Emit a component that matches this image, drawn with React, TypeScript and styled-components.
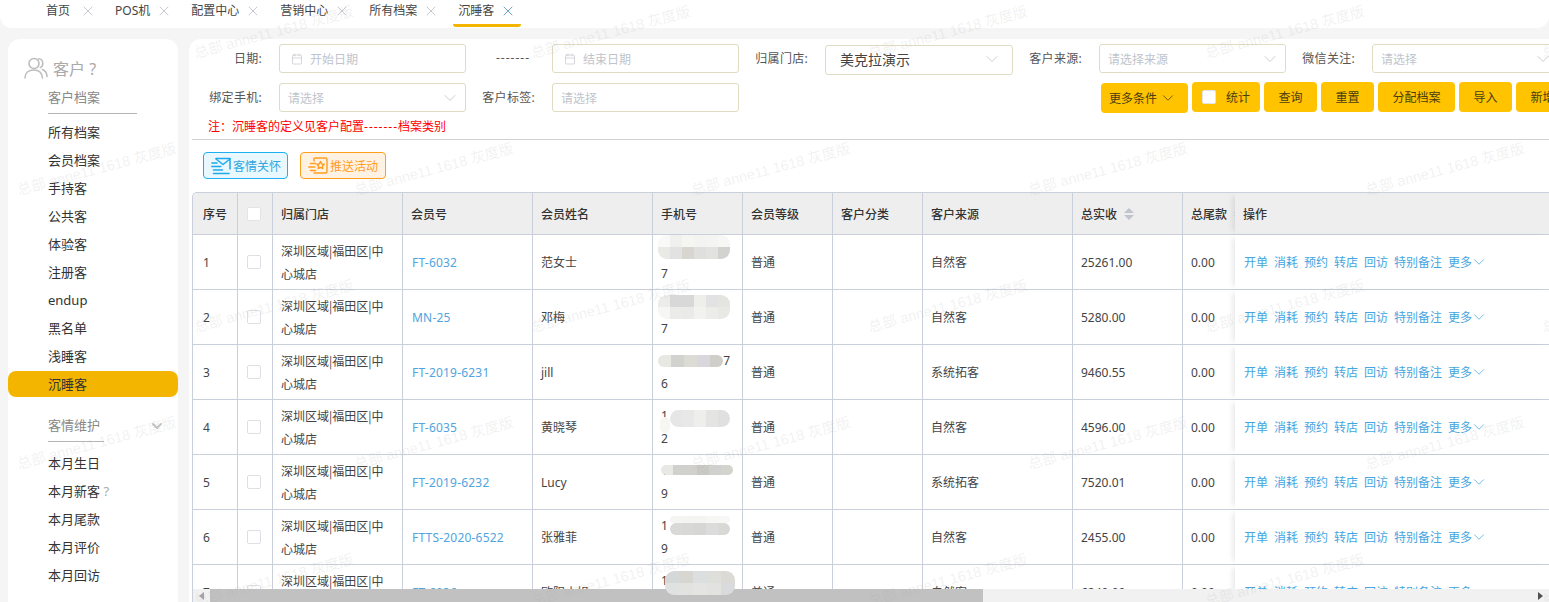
import React from "react";
import styled, { createGlobalStyle } from "styled-components";
import { Calendar, ChevronDown, X } from "lucide-react";

const GlobalStyle = createGlobalStyle`
  html, body { margin: 0; padding: 0; height: 100%; overflow: hidden; background: #f5f5f5; }
  body { font-family: "Noto Sans", "Noto Sans CJK SC", "Liberation Sans", sans-serif; font-size: 12px; color: #333; }
  * { box-sizing: border-box; }
`;

const Page = styled.div`
  position: relative;
  width: 100vw;
  height: 100vh;
  overflow: hidden;
  display: flex;
  flex-direction: column;
`;

const TabBar = styled.nav`
  flex: none;
  height: 28px;
  background: #fff;
  border-radius: 0 0 12px 12px;
  display: flex;
  gap: 9px;
  padding-left: 41px;
`;

const Tab = styled.div<{ $active?: boolean; $first?: boolean }>`
  height: 27px;
  padding: 0 5px 2px;
  display: flex;
  align-items: center;
  gap: ${(p) => (p.$first ? 10 : 6)}px;
  line-height: 22px;
  color: #444;
  border-bottom: 3px solid ${(p) => (p.$active ? "#f3b500" : "transparent")};
  border-radius: 0 0 3px 3px;
  svg { color: ${(p) => (p.$active ? "#4a8fb5" : "#b8bcc4")}; }
`;

const Body = styled.div`
  flex: 1;
  min-height: 0;
  display: flex;
  gap: 11px;
  padding: 11px 0 0 8px;
`;

const Sidebar = styled.aside`
  flex: none;
  width: 170px;
  background: #fff;
  border-radius: 12px 12px 0 0;
  padding-top: 18px;
`;

const SideTitle = styled.div`
  height: 22px;
  padding-left: 16px;
  display: flex;
  align-items: center;
  gap: 5px;
  font-size: 16px;
  color: #aaa;
`;

const SideHeadRow = styled.div<{ $top: number; $bottom: number }>`
  display: flex;
  align-items: center;
  padding-left: 40px;
  margin: ${(p) => p.$top}px 0 ${(p) => p.$bottom}px;
  svg { margin-left: 45px; color: #c4c4c4; margin-top: -2px; }
`;

const SideHead = styled.div<{ $w: number }>`
  width: ${(p) => p.$w}px;
  height: 31px;
  line-height: 29px;
  font-size: 13px;
  color: #888;
  border-bottom: 1px solid #b5b5b5;
`;

const SideList = styled.div`
  display: flex;
  flex-direction: column;
  gap: 2px;
`;

const SideItem = styled.div<{ $active?: boolean }>`
  height: 26px;
  line-height: 26px;
  padding-left: 40px;
  font-size: 13px;
  color: #333;
  border-radius: 8px;
  background: ${(p) => (p.$active ? "#f3b500" : "transparent")};
`;

const Hint = styled.span`
  color: #aaa;
`;

const Main = styled.main`
  flex: 1;
  min-width: 0;
  background: #fff;
  border-radius: 12px 0 0 0;
  padding-top: 5px;
  display: flex;
  flex-direction: column;
  overflow: hidden;
`;

const FormRow = styled.div<{ $bottom?: number }>`
  display: flex;
  align-items: flex-start;
  flex: none;
  margin-bottom: ${(p) => p.$bottom ?? 0}px;
`;

const Label = styled.label<{ $w: number }>`
  flex: none;
  width: ${(p) => p.$w}px;
  margin-right: 17px;
  text-align: right;
  line-height: 29px;
  letter-spacing: 0.3px;
  color: #555;
`;

const Dashes = styled.span`
  letter-spacing: 1px;
`;

const Separator = styled.span`
  flex: none;
  width: 86px;
  padding-left: 30px;
  line-height: 27px;
  color: #555;
`;

const Control = styled.div<{ $w?: number; $value?: boolean }>`
  flex: none;
  width: ${(p) => p.$w ?? 187}px;
  height: ${(p) => (p.$value ? 30 : 29)}px;
  margin-top: ${(p) => (p.$value ? 1 : 0)}px;
  padding: ${(p) => (p.$value ? "0 14px 2px" : "0 9px 0 8px")};
  border: 1px solid #e0dcc2;
  border-radius: 3px;
  display: flex;
  align-items: center;
  justify-content: space-between;
  color: ${(p) => (p.$value ? "#444" : "#c0c4cc")};
  font-size: ${(p) => (p.$value ? 14 : 12)}px;
  background: #fff;
  svg { flex: none; }
`;

const DateText = styled.span`
  display: flex;
  align-items: center;
  gap: 7px;
  padding-left: 3px;
  svg { color: #bfc3cb; }
`;

const ChevronSlot = styled.span`
  display: flex;
  margin-right: -4px;
  color: #bfc3cb;
`;

const ButtonGroup = styled.div`
  flex: none;
  display: flex;
  gap: 4px;
  margin-left: 362px;
  margin-top: -1px;
`;

const YellowButton = styled.div<{ $w: number; $low?: boolean }>`
  flex: none;
  width: ${(p) => p.$w}px;
  height: 30px;
  margin-top: ${(p) => (p.$low ? 1 : 0)}px;
  background: #ffc300;
  border-radius: 4px;
  color: #4a3d10;
  display: flex;
  align-items: center;
  justify-content: ${(p) => (p.$low ? "flex-start" : "center")};
  padding-left: ${(p) => (p.$low ? 8 : 0)}px;
  gap: 2px;
`;

const WhiteCheck = styled.span`
  width: 14px;
  height: 14px;
  margin-right: 8px;
  background: #fff;
  border: 1px solid #e4e4e4;
  border-radius: 2px;
`;

const Note = styled.div`
  flex: none;
  height: 18px;
  margin: 5px 0 3px;
  padding-left: 19px;
  line-height: 18px;
  color: #f00;
`;

const Divider = styled.div`
  flex: none;
  margin-left: 3px;
  border-top: 1px solid #d2d2d2;
`;

const ActionRow = styled.div`
  flex: none;
  display: flex;
  gap: 12px;
  padding-left: 14px;
  margin: 12px 0 13px;
`;

const ActionButton = styled.div<{ $tone: "blue" | "orange"; $w: number }>`
  width: ${(p) => p.$w}px;
  height: 27px;
  border-radius: 4px;
  display: flex;
  align-items: center;
  gap: 2px;
  padding-left: 7px;
  border: 1px solid ${(p) => (p.$tone === "blue" ? "#1bb0f0" : "#ff9f1a")};
  background: ${(p) => (p.$tone === "blue" ? "#e9f7ff" : "#fff2e3")};
  color: ${(p) => (p.$tone === "blue" ? "#2ea7e0" : "#ff9d1e")};
`;

const TableWrap = styled.div`
  position: relative;
  flex: 1;
  min-height: 0;
  margin-left: 3px;
  overflow: hidden;
  border-top: 1px solid #c9d0dc;
  border-left: 1px solid #c9d0dc;
  border-top-left-radius: 5px;
`;

const COLUMNS = "45px 35px 130px 130px 120px 90px 90px 90px 150px 110px 52px 1fr";

const HeadRow = styled.div`
  display: grid;
  grid-template-columns: ${COLUMNS};
  height: 42px;
  background: #eee;
  border-bottom: 1px solid #c9d0dc;
`;

const BodyRow = styled.div`
  display: grid;
  grid-template-columns: ${COLUMNS};
  height: 55px;
  border-bottom: 1px solid #c9d0dc;
`;

const HeadCell = styled.div<{ $pad?: number; $plain?: boolean }>`
  display: flex;
  align-items: center;
  gap: 7px;
  overflow: hidden;
  white-space: nowrap;
  padding-left: ${(p) => p.$pad ?? 8}px;
  border-right: ${(p) => (p.$plain ? "0" : "1px solid #c9d0dc")};
  font-weight: 500;
  color: #333;
`;

const Cell = styled.div<{ $pad?: number; $plain?: boolean }>`
  display: flex;
  align-items: center;
  overflow: hidden;
  padding-left: ${(p) => p.$pad ?? 8}px;
  padding-right: 12px;
  line-height: 23px;
  border-right: ${(p) => (p.$plain ? "0" : "1px solid #c9d0dc")};
  color: #444;
`;

const StoreCell = styled(Cell)`
  font-family: "Noto Sans CJK SC", "Noto Sans", sans-serif;
`;

const OpHead = styled(HeadCell)`
  position: relative;
  z-index: 1;
  background: #eee;
  box-shadow: -5px 0 6px -3px rgba(0, 0, 0, 0.1);
`;

const OpCell = styled(Cell)`
  position: relative;
  z-index: 1;
  gap: 6px;
  background: #fff;
  white-space: nowrap;
  box-shadow: -5px 0 6px -3px rgba(0, 0, 0, 0.1);
`;

const MemberLink = styled.span`
  color: #50a4e0;
  padding-left: 1px;
  letter-spacing: 0.2px;
  white-space: nowrap;
`;

const OpLink = styled.span`
  display: inline-flex;
  align-items: center;
  color: #45a5e0;
  svg { margin-left: -2px; }
`;

const Check = styled.span<{ $head?: boolean }>`
  flex: none;
  width: 14px;
  height: 14px;
  background: #fff;
  border: 1px solid ${(p) => (p.$head ? "#e4e4e4" : "#dcdfe6")};
  border-radius: 2px;
`;

const SortIcon = styled.span`
  display: flex;
  flex-direction: column;
  gap: 2px;
  &::before, &::after {
    content: "";
    width: 0;
    height: 0;
    border-left: 5px solid transparent;
    border-right: 5px solid transparent;
  }
  &::before { border-bottom: 5px solid #c0c4cc; }
  &::after { border-top: 5px solid #c0c4cc; }
`;

const PhoneCell = styled.div`
  position: relative;
  padding-left: 8px;
  border-right: 1px solid #c9d0dc;
  line-height: 23px;
  color: #444;
  display: flex;
  flex-direction: column;
  justify-content: center;
`;

const PhoneLine = styled.div<{ $end?: boolean }>`
  height: 23px;
  text-align: ${(p) => (p.$end ? "right" : "left")};
  padding-right: 12px;
`;

const Mosaic = styled.div<{ $left: number; $top: number; $cols: number; $w: number; $h: number }>`
  position: absolute;
  z-index: 3;
  left: ${(p) => p.$left}px;
  top: ${(p) => p.$top}px;
  display: grid;
  grid-template-columns: repeat(${(p) => p.$cols}, ${(p) => p.$w}px);
  grid-auto-rows: ${(p) => p.$h}px;
  border-radius: 9px;
  overflow: hidden;
  filter: blur(0.7px);
`;

const MosaicBlock = styled.span<{ $c: string }>`
  background: ${(p) => p.$c};
`;

const ScrollBar = styled.div`
  position: absolute;
  z-index: 2;
  left: 0;
  right: 0;
  bottom: 0;
  height: 13px;
  background: #f1f1f1;
  display: flex;
  align-items: center;
`;

const ScrollArrow = styled.span<{ $dir: "left" | "right" }>`
  flex: none;
  width: 17px;
  display: flex;
  justify-content: center;
  &::before {
    content: "";
    width: 0;
    height: 0;
    border-top: 4px solid transparent;
    border-bottom: 4px solid transparent;
    ${(p) => (p.$dir === "left" ? "border-right: 5px solid #a3a3a3;" : "border-left: 5px solid #505050;")}
  }
`;

const ScrollThumb = styled.span`
  flex: none;
  width: 773px;
  height: 13px;
  background: #c1c1c1;
`;

const ScrollSpace = styled.span`
  flex: 1;
`;

const WatermarkLayer = styled.div`
  position: absolute;
  inset: 0;
  z-index: 10;
  overflow: hidden;
  pointer-events: none;
`;

const Watermark = styled.span<{ $x: number; $y: number }>`
  position: absolute;
  left: ${(p) => p.$x}px;
  top: ${(p) => p.$y - 20}px;
  line-height: 20px;
  white-space: nowrap;
  font-family: "Liberation Sans", "Noto Sans CJK SC", sans-serif;
  font-size: 14.5px;
  color: rgba(170, 170, 170, 0.17);
  transform-origin: left bottom;
  transform: rotate(-15deg);
`;

const PeopleIcon = () => (
  <svg width="24" height="22" viewBox="0 0 24 22" fill="none" stroke="#bdbdbd" strokeWidth="1.6" strokeLinecap="round">
    <circle cx="10" cy="6.5" r="5" />
    <path d="M1 21c0-5 3.5-8 9-8s8 3 8.5 8" />
    <path d="M14.5 1.8c2.5 0 4.3 2 4.3 4.6 0 2-1 3.4-2.6 4.2" />
    <path d="M18.5 12.5c2.6 1 4.3 3.5 4.5 7" />
  </svg>
);

const MailIcon = () => (
  <svg width="20" height="18" viewBox="0 0 20 18" fill="none" stroke="#1ea9ea" strokeWidth="1.5" strokeLinejoin="round" strokeLinecap="round">
    <path d="M5 1.5h14v10.5" />
    <path d="M5 2l7 5.5L19 2" />
    <path d="M1 6h5M0.8 9.5h9M2.5 13h9" strokeWidth="1.6" />
    <path d="M2.5 16.5h15.5" strokeWidth="1.6" />
  </svg>
);

const StarBoxIcon = () => (
  <svg width="20" height="18" viewBox="0 0 20 18" fill="none" stroke="#ff9d1e" strokeWidth="1.4" strokeLinejoin="round" strokeLinecap="round">
    <path d="M6 4V2.2C6 1.5 6.5 1 7.2 1h10.3c.8 0 1.5.7 1.5 1.5v12c0 .8-.7 1.5-1.5 1.5H6" />
    <path d="M12.5 4.5l1.2 2.4 2.5.4-1.8 1.8.4 2.5-2.3-1.2-2.3 1.2.4-2.5-1.8-1.8 2.5-.4z" />
    <path d="M2.5 6.5h5M0.8 10h6M2.5 13.5h5" strokeWidth="1.6" />
  </svg>
);

const TABS = ["首页", "POS机", "配置中心", "营销中心", "所有档案", "沉睡客"];
const ARCHIVE = ["所有档案", "会员档案", "手持客", "公共客", "体验客", "注册客", "endup", "黑名单", "浅睡客", "沉睡客"];
const CARE = ["本月生日", "本月新客", "本月尾款", "本月评价", "本月回访"];
const OPS = ["开单", "消耗", "预约", "转店", "回访", "特别备注"];

type Patch = { left: number; top: number; cols: number; w: number; h: number; colors: string[] };
type Row = {
  no: number;
  member: string;
  name: string;
  top?: string;
  topEnd?: boolean;
  bottom: string;
  source: string;
  total: string;
  patches: Patch[];
};

const ROWS: Row[] = [
  {
    no: 1, member: "FT-6032", name: "范女士", bottom: "7", source: "自然客", total: "25261.00",
    patches: [{ left: 5, top: 0, cols: 6, w: 12, h: 12, colors: ["#f9f9f7", "#f0f0ee", "#f5f5f2", "#f3f3f1", "#f4f4f2", "#f7f7f5", "#e9e9e5", "#e2e2e2", "#d8d6d0", "#dfdfdd", "#e2e2de", "#d2d2d0"] }],
  },
  {
    no: 2, member: "MN-25", name: "邓梅", bottom: "7", source: "自然客", total: "5280.00",
    patches: [{ left: 5, top: 5, cols: 6, w: 12, h: 12, colors: ["#ececea", "#d8d8d8", "#d8d8d8", "#eeeeea", "#e2e2e4", "#e4e4e0", "#f6f6f4", "#ebebe9", "#eaeae8", "#f2f2ee", "#ecece9", "#e8e8e4"] }],
  },
  {
    no: 3, member: "FT-2019-6231", name: "jill", top: "7", topEnd: true, bottom: "6", source: "系统拓客", total: "9460.55",
    patches: [{ left: 5, top: 10, cols: 5, w: 13, h: 12, colors: ["#e8e8e2", "#d2d2ce", "#dcdcd4", "#d8d8dc", "#d0cec8"] }],
  },
  {
    no: 4, member: "FT-6035", name: "黄晓琴", top: "1", bottom: "2", source: "自然客", total: "4596.00",
    patches: [
      { left: 17, top: 10, cols: 5, w: 12, h: 17, colors: ["#e6e6e6", "#e8e8e8", "#eeeeec", "#e4e4e2", "#e0e0e0"] },
      { left: 7, top: 17, cols: 1, w: 10, h: 16, colors: ["#f6f6f3"] },
    ],
  },
  {
    no: 5, member: "FT-2019-6232", name: "Lucy", top: "1", bottom: "9", source: "系统拓客", total: "7520.01",
    patches: [{ left: 8, top: 10, cols: 6, w: 12, h: 10, colors: ["#e8e8e4", "#d0d0cc", "#d2d0ca", "#c8c8c4", "#d0d0ce", "#d4d4ce"] }],
  },
  {
    no: 6, member: "FTTS-2020-6522", name: "张雅菲", top: "1", bottom: "9", source: "自然客", total: "2455.00",
    patches: [
      { left: 17, top: 6, cols: 5, w: 12, h: 7, colors: ["#f5f5f3", "#f4f4f2", "#f4f4f2", "#f6f6f4", "#f7f7f5"] },
      { left: 17, top: 13, cols: 5, w: 12, h: 12, colors: ["#d9d9d7", "#d8d8d6", "#d6d6d4", "#dcdcdc", "#d8d8d4"] },
    ],
  },
  {
    no: 7, member: "FT-6036", name: "欧阳小姐", top: "1", bottom: "", source: "自然客", total: "6240.00",
    patches: [{ left: 12, top: 6, cols: 5, w: 14, h: 12, colors: ["#d4d8d8", "#d8d6d0", "#dcdfe0", "#dedfda", "#dcdad4", "#e0e2e2", "#e2e2e0", "#e4e4e2", "#e2e2de", "#d8dadc"] }],
  },
];

const HEADERS = ["归属门店", "会员号", "会员姓名", "手机号", "会员等级", "客户分类", "客户来源"];

const MARK_TEXT = "总部 anne11 1618 灰度版";
const MARKS = [63, 200, 337, 474, 611].flatMap((y, row) =>
  [0, 1, 2, 3, 4].map((i) => ({ y, x: (row % 2 === 0 ? 197 : 20) + i * 337 }))
);

export default function App() {
  return (
    <Page>
      <GlobalStyle />
      <TabBar>
        {TABS.map((t, i) => (
          <Tab key={t} $active={i === TABS.length - 1} $first={i === 0}>
            {t}
            <X size={16} strokeWidth={1.2} />
          </Tab>
        ))}
      </TabBar>
      <Body>
        <Sidebar>
          <SideTitle>
            <PeopleIcon />
            客户 ?
          </SideTitle>
          <SideHeadRow $top={4} $bottom={5}>
            <SideHead $w={89}>客户档案</SideHead>
          </SideHeadRow>
          <SideList>
            {ARCHIVE.map((t, i) => (
              <SideItem key={t} $active={i === ARCHIVE.length - 1}>{t}</SideItem>
            ))}
          </SideList>
          <SideHeadRow $top={14} $bottom={8}>
            <SideHead $w={56}>客情维护</SideHead>
            <ChevronDown size={16} strokeWidth={3} />
          </SideHeadRow>
          <SideList>
            {CARE.map((t, i) => (
              <SideItem key={t}>
                {t}
                {i === 1 && <Hint> ?</Hint>}
              </SideItem>
            ))}
          </SideList>
        </Sidebar>
        <Main>
          <FormRow $bottom={8}>
            <Label $w={73}>日期:</Label>
            <Control>
              <DateText><Calendar size={12} strokeWidth={1.3} />开始日期</DateText>
            </Control>
            <Separator><Dashes>-------</Dashes></Separator>
            <Control>
              <DateText><Calendar size={12} strokeWidth={1.3} />结束日期</DateText>
            </Control>
            <Label $w={69}>归属门店:</Label>
            <Control $w={188} $value>
              美克拉演示
              <ChevronSlot><ChevronDown size={20} strokeWidth={1} /></ChevronSlot>
            </Control>
            <Label $w={69}>客户来源:</Label>
            <Control>
              请选择来源
              <ChevronSlot><ChevronDown size={20} strokeWidth={1} /></ChevronSlot>
            </Control>
            <Label $w={69}>微信关注:</Label>
            <Control>
              请选择
              <ChevronSlot><ChevronDown size={20} strokeWidth={1} /></ChevronSlot>
            </Control>
          </FormRow>
          <FormRow>
            <Label $w={73}>绑定手机:</Label>
            <Control>
              请选择
              <ChevronSlot><ChevronDown size={20} strokeWidth={1} /></ChevronSlot>
            </Control>
            <Label $w={69}>客户标签:</Label>
            <Control>请选择</Control>
            <ButtonGroup>
              <YellowButton $w={87} $low>
                更多条件
                <ChevronDown size={18} strokeWidth={1} />
              </YellowButton>
              <YellowButton $w={68}>
                <WhiteCheck />
                统计
              </YellowButton>
              <YellowButton $w={53}>查询</YellowButton>
              <YellowButton $w={53}>重置</YellowButton>
              <YellowButton $w={77}>分配档案</YellowButton>
              <YellowButton $w={53}>导入</YellowButton>
              <YellowButton $w={53}>新增</YellowButton>
            </ButtonGroup>
          </FormRow>
          <Note>注：沉睡客的定义见客户配置<Dashes>-------</Dashes>档案类别</Note>
          <Divider />
          <ActionRow>
            <ActionButton $tone="blue" $w={85}><MailIcon />客情关怀</ActionButton>
            <ActionButton $tone="orange" $w={86}><StarBoxIcon />推送活动</ActionButton>
          </ActionRow>
          <TableWrap>
            <HeadRow>
              <HeadCell $pad={10}>序号</HeadCell>
              <HeadCell $pad={9}><Check $head /></HeadCell>
              {HEADERS.map((h) => (
                <HeadCell key={h}>{h}</HeadCell>
              ))}
              <HeadCell>总实收<SortIcon /></HeadCell>
              <HeadCell $plain>总尾款<SortIcon /></HeadCell>
              <OpHead $plain>操作</OpHead>
            </HeadRow>
            {ROWS.map((r) => (
              <BodyRow key={r.no}>
                <Cell $pad={10}>{r.no}</Cell>
                <Cell $pad={9}><Check /></Cell>
                <StoreCell>深圳区域|福田区|中心城店</StoreCell>
                <Cell><MemberLink>{r.member}</MemberLink></Cell>
                <Cell>{r.name}</Cell>
                <PhoneCell>
                  <PhoneLine $end={r.topEnd}>{r.top ?? ""}</PhoneLine>
                  <PhoneLine>{r.bottom}</PhoneLine>
                  {r.patches.map((p, pi) => (
                    <Mosaic key={pi} $left={p.left} $top={p.top} $cols={p.cols} $w={p.w} $h={p.h}>
                      {p.colors.map((c, ci) => (
                        <MosaicBlock key={ci} $c={c} />
                      ))}
                    </Mosaic>
                  ))}
                </PhoneCell>
                <Cell>普通</Cell>
                <Cell />
                <Cell>{r.source}</Cell>
                <Cell>{r.total}</Cell>
                <Cell $plain>0.00</Cell>
                <OpCell $plain $pad={9}>
                  {OPS.map((o) => (
                    <OpLink key={o}>{o}</OpLink>
                  ))}
                  <OpLink>
                    更多
                    <ChevronDown size={18} strokeWidth={1} />
                  </OpLink>
                </OpCell>
              </BodyRow>
            ))}
            <ScrollBar>
              <ScrollArrow $dir="left" />
              <ScrollThumb />
              <ScrollSpace />
              <ScrollArrow $dir="right" />
            </ScrollBar>
          </TableWrap>
        </Main>
      </Body>
      <WatermarkLayer>
        {MARKS.map((m) => (
          <Watermark key={`${m.x}-${m.y}`} $x={m.x} $y={m.y}>{MARK_TEXT}</Watermark>
        ))}
      </WatermarkLayer>
    </Page>
  );
}
